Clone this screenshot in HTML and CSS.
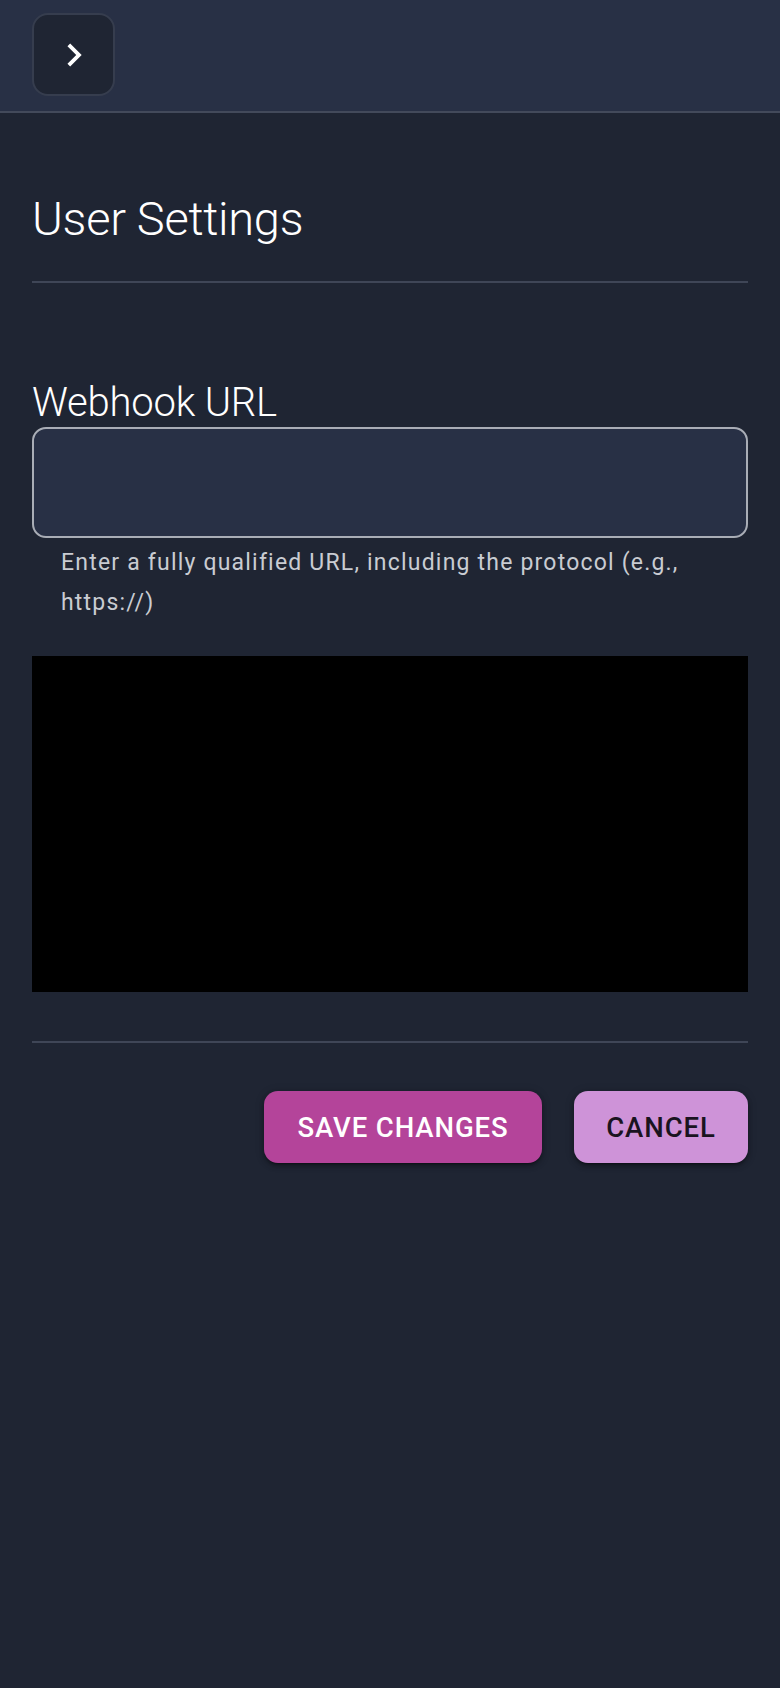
FILE: index.html
```html
<!DOCTYPE html>
<html lang="en">
<head>
<meta charset="utf-8">
<title>User Settings</title>
<link rel="stylesheet" href="styles.css">
</head>
<body>
<header class="topbar">
  <button class="menu-btn" type="button" aria-label="Open menu">
    <svg class="chevron" viewBox="0 0 24 24" width="46" height="46" aria-hidden="true">
      <path fill="#ffffff" d="M10 6 8.59 7.41 13.17 12l-4.58 4.59L10 18l6-6z"/>
    </svg>
  </button>
</header>
<main class="content">
  <h1 class="title">User Settings</h1>
  <hr class="divider">
  <section class="field">
    <label class="field-label" for="webhook">Webhook URL</label>
    <input class="field-input" id="webhook" type="text">
    <p class="helper">Enter a fully qualified URL, including the protocol (e.g., https://)</p>
  </section>
  <div class="preview"></div>
  <hr class="divider divider-bottom">
  <div class="actions">
    <button class="btn btn-save" type="button">Save Changes</button>
    <button class="btn btn-cancel" type="button">Cancel</button>
  </div>
</main>
</body>
</html>
```
FILE: styles.css
```css
html, body {
  margin: 0;
  padding: 0;
}
body {
  background: #1f2533;
  font-family: Roboto, "Liberation Sans", Arial, sans-serif;
  color: #ffffff;
  min-height: 1688px;
}
.topbar {
  background: #283045;
  border-bottom: 2px solid #434a5b;
  box-sizing: border-box;
  display: flex;
  align-items: center;
  padding: 0 32px;
  height: 113px;
}
.menu-btn {
  width: 83px;
  height: 83px;
  box-sizing: border-box;
  border: 2px solid #363d4e;
  border-radius: 16px;
  background: #1f2533;
  display: flex;
  align-items: center;
  justify-content: center;
  padding: 0;
  margin-top: -2px;
}
.chevron {
  display: block;
}
.content {
  padding: 78px 32px 0;
}
.title {
  margin: 0;
  font-size: 47px;
  line-height: 56px;
  font-weight: 300;
  letter-spacing: -0.3px;
  color: #ffffff;
}
.divider {
  margin: 34px 0 0;
  border: 0;
  height: 2px;
  background: #3f4657;
}
.field {
  margin-top: 96px;
  display: flex;
  flex-direction: column;
}
.field-label {
  font-size: 40px;
  line-height: 48px;
  font-weight: 300;
  letter-spacing: -0.2px;
  color: #ffffff;
}
.field-input {
  box-sizing: border-box;
  height: 111px;
  width: 100%;
  border: 2px solid #a9adb6;
  border-radius: 14px;
  background: #283045;
  color: #ffffff;
  font: inherit;
  font-size: 28px;
  padding: 0 28px;
  outline: none;
}
.helper {
  margin: 5px 28px 0 29px;
  font-size: 23px;
  line-height: 40px;
  letter-spacing: 1.2px;
  color: #c9ccd2;
}
.preview {
  margin-top: 33px;
  height: 336px;
  background: #000000;
}
.divider-bottom {
  margin-top: 49px;
}
.actions {
  margin-top: 48px;
  display: flex;
  justify-content: flex-end;
  gap: 32px;
}
.btn {
  height: 72px;
  border: 0;
  border-radius: 14px;
  font-family: Roboto, "Liberation Sans", Arial, sans-serif;
  font-weight: 500;
  font-size: 27.5px;
  letter-spacing: 0.9px;
  text-transform: uppercase;
  padding: 0 20px;
  box-shadow: 0 3px 2px -2px rgba(0,0,0,0.35), 0 3px 5px 0 rgba(0,0,0,0.25), 0 1px 10px 0 rgba(0,0,0,0.2);
}
.btn-save {
  width: 278px;
  background: #b4449a;
  color: #ffffff;
}
.btn-cancel {
  width: 174px;
  background: #ce93d8;
  color: #1a1320;
}
```
